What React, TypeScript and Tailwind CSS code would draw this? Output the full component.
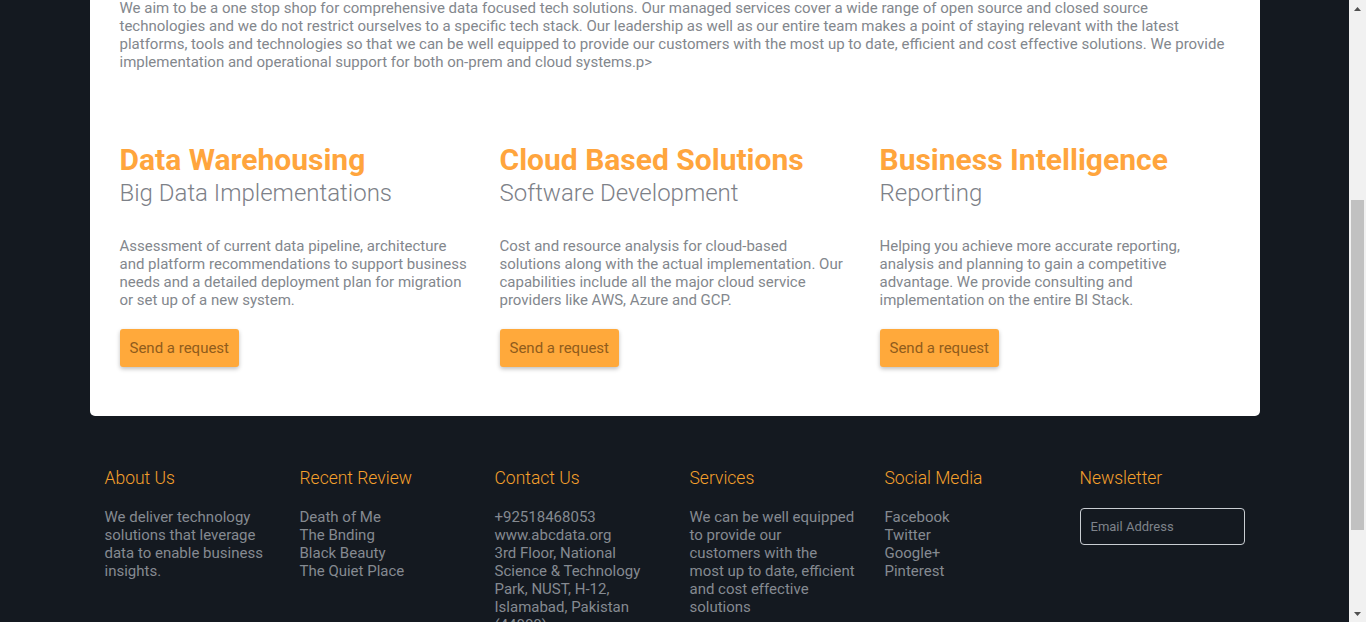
import React from "react";

const services = [
  {
    title: "Data Warehousing",
    sub: "Big Data Implementations",
    text: "Assessment of current data pipeline, architecture and platform recommendations to support business needs and a detailed deployment plan for migration or set up of a new system.",
  },
  {
    title: "Cloud Based Solutions",
    sub: "Software Development",
    text: "Cost and resource analysis for cloud-based solutions along with the actual implementation. Our capabilities include all the major cloud service providers like AWS, Azure and GCP.",
  },
  {
    title: "Business Intelligence",
    sub: "Reporting",
    text: "Helping you achieve more accurate reporting, analysis and planning to gain a competitive advantage. We provide consulting and implementation on the entire BI Stack.",
  },
];

function FooterCol({ title, children }: { title: string; children?: React.ReactNode }) {
  return (
    <div className="pl-[15px] pr-[10px]">
      <h4 className="text-[17.5px] font-light leading-[26px] text-[#f5a02c]">{title}</h4>
      <div className="mt-[17px] text-[15px] leading-[18px] text-[#858a91]">{children}</div>
    </div>
  );
}

// fake browser scrollbar, the page in the shot is scrolled down
function Scrollbar() {
  return (
    <div className="flex w-[17px] shrink-0 flex-col bg-[#f1f1f1]">
      <div className="flex h-[17px] items-center justify-center">
        <svg width="7" height="4" viewBox="0 0 7 4">
          <path d="M0 4 L3.5 0 L7 4 Z" fill="#505050" />
        </svg>
      </div>
      <div className="flex-1 px-[2px]">
        <div className="mt-[183px] h-[330px] bg-[#c1c1c1]" />
      </div>
      <div className="flex h-[17px] items-center justify-center">
        <svg width="7" height="4" viewBox="0 0 7 4">
          <path d="M0 0 L3.5 4 L7 0 Z" fill="#505050" />
        </svg>
      </div>
    </div>
  );
}

export default function App() {
  return (
    <div className="flex h-screen overflow-hidden bg-[#141920]" style={{ fontFamily: "Roboto, 'Noto Sans', sans-serif" }}>
      <div className="flex-1 overflow-hidden">
        {/* services card */}
        <div className="mx-auto -mt-px w-[1170px] rounded-b-[5px] bg-white pb-[49px] pl-[30px]">
          <p className="w-[1110px] text-[15px] leading-[18px] text-[#83878d]">
            We aim to be a one stop shop for comprehensive data focused tech solutions. Our managed services
            cover a wide range of open source and closed source technologies and we do not restrict ourselves to a
            specific tech stack. Our leadership as well as our entire team makes a point of staying relevant with
            the latest platforms, tools and technologies so that we can be well equipped to provide our customers
            with the most up to date, efficient and cost effective solutions. We provide implementation and
            operational support for both on-prem and cloud systems.p&gt;
          </p>

          <div className="mt-[72px] grid w-[1140px] grid-cols-3">
            {services.map((s) => (
              <div key={s.title} className="pr-[30px]">
                <h2 className="text-[30px] font-bold leading-[34px] text-[#ffa53d]">{s.title}</h2>
                <h3 className="mt-[1px] text-[24px] font-light leading-[30px] text-[#7d8188]">{s.sub}</h3>
                <p className="mt-[29px] text-[15px] leading-[18px] text-[#83878d]">{s.text}</p>
                <button className="mt-[20px] h-[38px] rounded-[3px] bg-[#ffa93b] px-[10px] text-[15px] text-[#8f5c1c] shadow-[0_2px_4px_rgba(0,0,0,0.25)]">
                  Send a request
                </button>
              </div>
            ))}
          </div>
        </div>

        {/* footer */}
        <div className="mx-auto mt-[49px] grid w-[1170px] grid-cols-6">
          <FooterCol title="About Us">
            <p>We deliver technology solutions that leverage data to enable business insights.</p>
          </FooterCol>
          <FooterCol title="Recent Review">
            <p>Death of Me</p>
            <p>The Bnding</p>
            <p>Black Beauty</p>
            <p>The Quiet Place</p>
          </FooterCol>
          <FooterCol title="Contact Us">
            <p>+92518468053</p>
            <p>www.abcdata.org</p>
            <p>3rd Floor, National Science &amp; Technology Park, NUST, H-12, Islamabad, Pakistan (44000)</p>
          </FooterCol>
          <FooterCol title="Services">
            <p>
              We can be well equipped
              <br />
              to provide our
              <br />
              customers with the
              <br />
              most up to date, efficient
              <br />
              and cost effective
              <br />
              solutions
            </p>
          </FooterCol>
          <FooterCol title="Social Media">
            <p>Facebook</p>
            <p>Twitter</p>
            <p>Google+</p>
            <p>Pinterest</p>
          </FooterCol>
          <div className="px-[15px]">
            <h4 className="text-[17.5px] font-light leading-[26px] text-[#f5a02c]">Newsletter</h4>
            <input
              type="email"
              placeholder="Email Address"
              className="mt-[17px] h-[37px] w-[165px] rounded-[4px] border border-[#c9cdd2] bg-transparent px-[10px] text-[13px] text-[#c9cdd2] placeholder:text-[#7e838a] focus:outline-none"
            />
          </div>
        </div>
      </div>
      <Scrollbar />
    </div>
  );
}
